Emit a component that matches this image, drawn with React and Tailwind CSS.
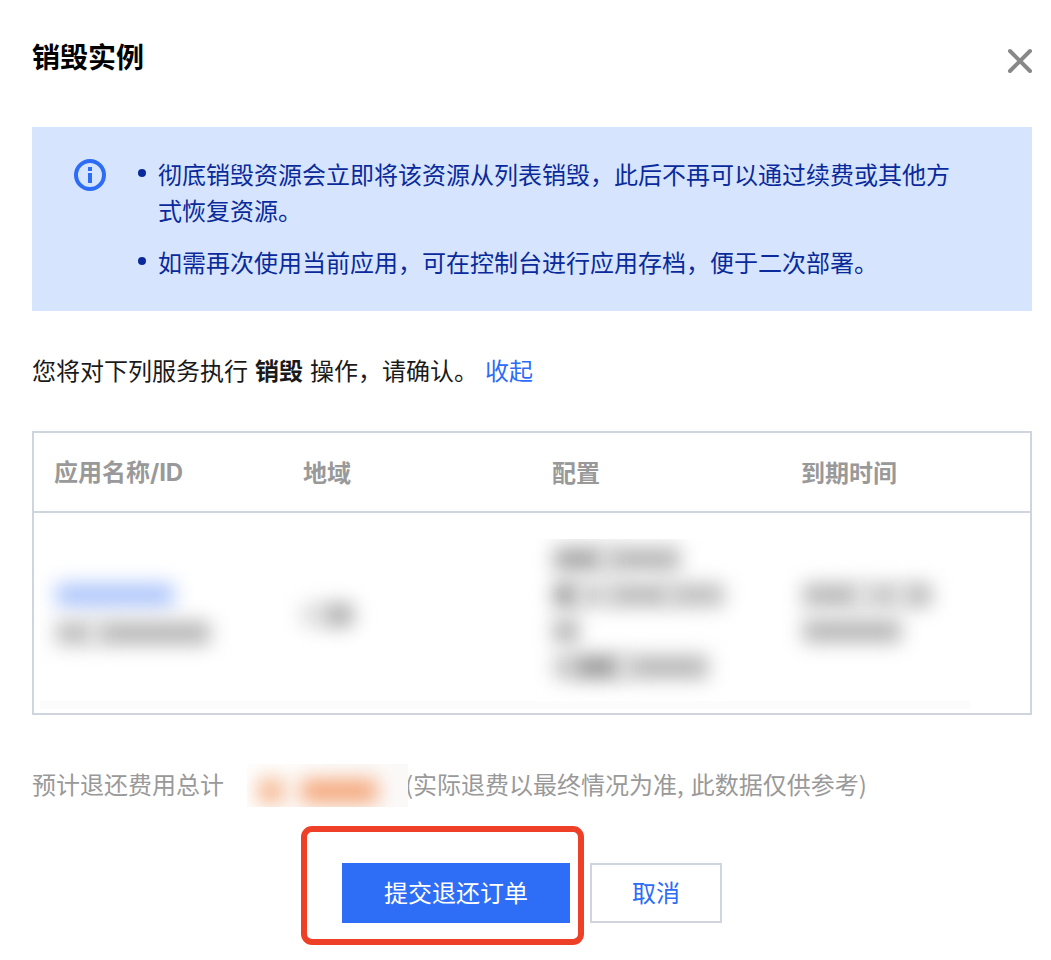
import React from "react";

const columns = [
  { name: "应用名称", suffix: "/ID" },
  { name: "地域" },
  { name: "配置" },
  { name: "到期时间" },
];

const notices = [
  "彻底销毁资源会立即将该资源从列表销毁，此后不再可以通过续费或其他方式恢复资源。",
  "如需再次使用当前应用，可在控制台进行应用存档，便于二次部署。",
];

export default function App() {
  return (
    <div
      lang="zh-CN"
      className="h-[960px] w-[1051px] overflow-hidden bg-white pl-8 pr-[19px] font-['Noto_Sans_CJK_SC',sans-serif] text-2xl leading-9 text-[#1a1a1a]"
    >
      <DialogHeader />
      <Notice />

      <p className="mb-[43px] mt-[41px] flex whitespace-pre">
        <span>您将对下列服务执行</span>
        <b className="ml-[7px] font-bold">销毁</b>
        <span className="ml-[7px]">操作，请确认。</span>
        <a className="ml-[7px] text-[#2c6cf6]">收起</a>
      </p>

      <InstanceTable />
      <RefundSummary />
      <Actions />
    </div>
  );
}

function DialogHeader() {
  return (
    <header className="flex h-[127px] items-start justify-between">
      <h1 className="mt-9 text-[28px] font-bold leading-10 text-black">
        销毁实例
      </h1>
      <button className="-mr-px mt-12" aria-label="关闭">
        <svg width="26" height="26" viewBox="0 0 26 26">
          <path
            d="M3 3 23 23M23 3 3 23"
            stroke="#888"
            strokeWidth="4"
            strokeLinecap="round"
          />
        </svg>
      </button>
    </header>
  );
}

function Notice() {
  return (
    <section className="flex h-46 bg-[#d6e5fd] pl-[42px] pt-[29px] text-[#0a2a9b]">
      <svg width="32" height="32" viewBox="0 0 32 32" className="mt-[3px] shrink-0">
        <circle
          cx="16"
          cy="16"
          r="14"
          fill="none"
          stroke="#2c6cf6"
          strokeWidth="4"
        />
        <path d="M14 8h4v4h-4zM14 14h4v10h-4z" fill="#2c6cf6" />
      </svg>
      <ul className="ml-8 flex w-[812px] flex-col gap-4">
        {notices.map((text) => (
          <li key={text} className="flex">
            <span className="mt-[13px] size-2 shrink-0 rounded-full bg-[#0a2a9b]" />
            <span className="ml-3">{text}</span>
          </li>
        ))}
      </ul>
    </section>
  );
}

function InstanceTable() {
  return (
    <section className="h-[284px] w-[1000px] border-2 border-[#cfd5de]">
      <div className="grid h-20 grid-cols-4 items-center border-b-2 border-[#cfd5de] font-bold text-[#999]">
        {columns.map(({ name, suffix }) => (
          <div key={name} className="pl-5">
            {name}
            {suffix && (
              <span className="font-['Inter',sans-serif] tracking-[-0.1px]">
                {suffix}
              </span>
            )}
          </div>
        ))}
      </div>

      {/* Private values are masked */}
      <div className="h-[200px] pl-1.5 pt-[26px]">
        <div className="grid h-[170px] w-[930px] grid-cols-[251px_249px_249px_181px] overflow-hidden border-b-8 border-[#fcfcfc]">
          <div className="flex flex-col gap-4 pl-4 pt-[45px]">
            <Mask className="h-[22px] w-[118px] bg-[#a9c2fb]" />
            <div className="flex">
              <Mask className="h-[22px] w-9 bg-[#b8b8b8]" />
              <Mask className="h-[22px] w-2 bg-[#d8d8d8]" />
              <Mask className="h-[22px] w-[110px] bg-[#b2b2b2]" />
            </div>
          </div>
          <div className="flex pl-2.5 pt-[65px]">
            <Mask className="h-[22px] w-6 bg-[#dcdcdc]" />
            <Mask className="h-[22px] w-7 bg-[#a6a6a6]" />
          </div>
          <div className="flex flex-col gap-3.5 pl-3.5 pt-[9px]">
            <div className="flex">
              <Mask className="h-[22px] w-12 bg-[#a2a2a2]" />
              <Mask className="h-[22px] w-2 bg-[#c4c4c4]" />
              <Mask className="h-[22px] w-[70px] bg-[#b2b2b2]" />
            </div>
            <div className="flex">
              <Mask className="h-[22px] w-6 bg-[#909090]" />
              <Mask className="h-[22px] w-8 bg-[#c8c8c8]" />
              <Mask className="h-[22px] w-[60px] bg-[#b6b6b6]" />
              <Mask className="h-[22px] w-[54px] bg-[#bababa]" />
            </div>
            <Mask className="h-[22px] w-6 bg-[#a8a8a8]" />
            <div className="flex">
              <Mask className="h-[22px] w-5 bg-[#c0c0c0]" />
              <Mask className="h-[22px] w-[46px] bg-[#929292]" />
              <Mask className="h-[22px] w-2.5 bg-[#cacaca]" />
              <Mask className="h-[22px] w-[78px] bg-[#b2b2b2]" />
            </div>
          </div>
          <div className="flex flex-col gap-3.5 pl-3.5 pt-[45px]">
            <div className="flex">
              <Mask className="h-[22px] w-14 bg-[#b4b4b4]" />
              <Mask className="h-[22px] w-2.5 bg-[#d4d4d4]" />
              <Mask className="h-[22px] w-[30px] bg-[#bebebe]" />
              <Mask className="h-[22px] w-2 bg-[#d4d4d4]" />
              <Mask className="h-[22px] w-6 bg-[#b0b0b0]" />
            </div>
            <Mask className="h-[22px] w-[98px] bg-[#b2b2b2]" />
          </div>
        </div>
      </div>
    </section>
  );
}

function Mask({ className }) {
  return <span className={`block shrink-0 blur-[10px] ${className}`} />;
}

function RefundSummary() {
  return (
    <div className="mt-[49px] flex h-[43px] whitespace-pre text-[#999]">
      <span className="mt-0.5">预计退还费用总计</span>
      <div className="z-10 ml-[23px] flex w-[161px] overflow-hidden bg-linear-to-r from-[#fefefd] to-[#fbf9f8] pl-3 pt-4">
        <Mask className="h-[22px] w-6 bg-[#f4aa7c]" />
        <Mask className="ml-[18px] h-[22px] w-[76px] bg-[#f4a070]" />
      </div>
      <span className="-ml-[3px] mt-0.5">(实际退费以最终情况为准,</span>
      <span className="ml-[7px] mt-0.5">此数据仅供参考)</span>
    </div>
  );
}

function Actions() {
  return (
    <div className="ml-[269px] mt-[19px] flex items-start">
      <div className="h-[119px] w-[283px] rounded-[11px] border-6 border-[#ee4026] pl-[35px] pt-[31px]">
        <button className="h-15 w-[228px] bg-[#2e6df6] pb-0.5 text-white">
          提交退还订单
        </button>
      </div>
      <button className="ml-1.5 mt-[37px] h-15 w-[132px] border-2 border-[#cfd5de] pb-0.5 text-[#2c6cf6]">
        取消
      </button>
    </div>
  );
}
